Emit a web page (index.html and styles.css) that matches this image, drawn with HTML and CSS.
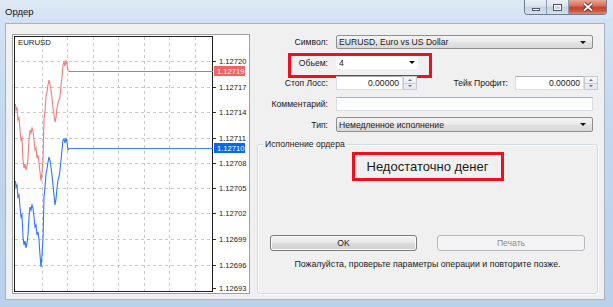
FILE: index.html
```html
<!DOCTYPE html>
<html>
<head>
<meta charset="utf-8">
<link rel="stylesheet" href="styles.css">
</head>
<body>
<div class="window">
  <div class="titlebar">
    <span class="title">Ордер</span>
    <div class="caption-btns">
      <span class="cbtn min"><i></i></span>
      <span class="cbtn max"><i></i></span>
      <span class="cbtn close">
        <svg width="14" height="10" viewBox="0 0 14 10"><path d="M3 1.5 L11 8.5 M11 1.5 L3 8.5" stroke="#5a1a12" stroke-width="3.4" fill="none"/><path d="M3 1.5 L11 8.5 M11 1.5 L3 8.5" stroke="#fff" stroke-width="1.8" fill="none"/></svg>
      </span>
    </div>
  </div>
  <div class="client">
    <div class="chart-panel">
      <svg class="chart" width="239" height="261" viewBox="12 34 239 261">
        <rect x="12.5" y="34.5" width="237" height="259" fill="#fff" stroke="#a0a0a0"/>
        <g stroke="#c9c9c9" stroke-dasharray="3 3" stroke-width="1">
          <path d="M42.5 37V291M67.5 37V291M93.5 37V291M118.5 37V291M144.5 37V291M169.5 37V291M195.5 37V291"/>
          <path d="M15 61.5H212M15 87.5H212M15 112.5H212M15 138.5H212M15 163.5H212M15 188.5H212M15 213.5H212M15 239.5H212M15 265.5H212"/>
        </g>
        <rect x="14.5" y="36.5" width="198" height="255" fill="none" stroke="#1e1e1e"/>
        <g stroke="#333">
          <path d="M213 61.5H216M213 87.5H216M213 112.5H216M213 138.5H216M213 163.5H216M213 188.5H216M213 213.5H216M213 239.5H216M213 265.5H216M213 288.5H216"/>
        </g>
        <g class="scale">
          <text x="219" y="64">1.12720</text>
          <text x="219" y="90">1.12717</text>
          <text x="219" y="115">1.12714</text>
          <text x="219" y="141">1.12711</text>
          <text x="219" y="166">1.12708</text>
          <text x="219" y="191">1.12705</text>
          <text x="219" y="216">1.12702</text>
          <text x="219" y="242">1.12699</text>
          <text x="219" y="268">1.12696</text>
          <text x="219" y="291">1.12693</text>
        </g>
        <text class="sym" x="18" y="45">EURUSD</text>
        <polyline fill="none" stroke="#f77a7a" stroke-width="1.1" points="15.5,104 16,110 17,108 18,120 19,118 20,130 21,140 22,138 23,160 24,168 25,164 26,170 27,166 28,158 29,140 30,130 31,133 32,128 33,131 34,140 35,150 36,148 37,158 38,155 39,163 40,172 41,181 42,172 43,160 44,120 45,110 46,97 47,92 48,85 49,80 50,84 51,90 52,98 53,108 54,115 55,122 56,118 57,108 58,103 59,100 60,97 61,85 62,77 63,65 64,62 65,66 66,61 67,64 68,70 69,71.5"/>
        <rect x="69" y="71" width="144" height="1" fill="#f46262"/>
        <polyline fill="none" stroke="#2a76ff" stroke-width="1.1" points="15.5,181 16,187 17,185 18,197 19,195 20,207 21,217 22,215 23,237 24,245 25,241 26,248 27,243 28,235 29,217 30,207 31,210 32,205 33,208 34,217 35,227 36,225 37,235 38,232 39,240 40,255 41,267 42,255 43,240 44,197 45,187 46,174 47,169 48,162 49,157 50,161 51,167 52,175 53,185 54,195 55,205 56,199 57,188 58,180 59,177 60,170 61,160 62,150 63,140 64,139 65,143 66,138 67,142 68,150 69,148.5"/>
        <rect x="69" y="148" width="144" height="1" fill="#3a82ff"/>
        <rect x="214" y="66" width="31" height="10" fill="#f06464"/>
        <text class="tag" x="217" y="74">1.12719</text>
        <rect x="214" y="143" width="31" height="10" fill="#0a66f5"/>
        <text class="tag" x="217" y="151">1.12710</text>
      </svg>
    </div>
    <div class="form">
      <div class="fields">
        <div class="row">
          <label class="lbl">Символ:</label>
          <div class="combo full"><span>EURUSD, Euro vs US Dollar</span><i class="arrow"></i></div>
        </div>
        <div class="row marked">
          <label class="lbl">Обьем:</label>
          <div class="edit-combo"><span>4</span><i class="arrow"></i></div>
        </div>
        <div class="row">
          <label class="lbl">Стоп Лосс:</label>
          <div class="spin-field sl"><span class="edit num">0.00000</span><span class="spin"><i class="up"></i><i class="down"></i></span></div>
          <label class="lbl2">Тейк Профит:</label>
          <div class="spin-field tp"><span class="edit num">0.00000</span><span class="spin"><i class="up"></i><i class="down"></i></span></div>
        </div>
        <div class="row">
          <label class="lbl">Комментарий:</label>
          <span class="edit full"></span>
        </div>
        <div class="row tall">
          <label class="lbl">Тип:</label>
          <div class="combo full"><span>Немедленное исполнение</span><i class="arrow"></i></div>
        </div>
      </div>
      <fieldset class="group">
        <legend>Исполнение ордера</legend>
        <div class="alert">Недостаточно денег</div>
        <div class="buttons">
          <button class="btn">OK</button>
          <button class="btn disabled">Печать</button>
        </div>
        <p class="note">Пожалуйста, проверьте параметры операции и повторите позже.</p>
      </fieldset>
    </div>
  </div>
</div>
</body>
</html>
```

FILE: styles.css
```css
* { box-sizing: border-box; }
html, body { margin: 0; padding: 0; }
body {
  width: 613px;
  height: 307px;
  overflow: hidden;
  font-family: "Liberation Sans", Arial, sans-serif;
  background: #c9dbef;
}
.window {
  width: 613px;
  height: 307px;
  display: flex;
  flex-direction: column;
  background: linear-gradient(180deg, #dfe9f5 0px, #d3e2f3 20px, #c4d8ef 120px, #b9d0eb 307px);
}
.titlebar {
  height: 23px;
  flex: none;
  display: flex;
  justify-content: space-between;
  align-items: flex-start;
  padding: 0 6px 0 5px;
}
.title {
  margin-top: 6px;
  font-size: 9.5px;
  color: #111;
}
.caption-btns {
  display: flex;
  height: 15px;
  border: 1px solid #6d7e93;
  border-top: none;
  border-radius: 0 0 4px 4px;
  overflow: hidden;
}
.cbtn {
  height: 14px;
  display: flex;
  align-items: center;
  justify-content: center;
}
.cbtn.min, .cbtn.max {
  width: 22px;
  background: linear-gradient(180deg, #eaf0f7 0, #dbe4ee 45%, #c6d2e0 50%, #d6e1ed 100%);
  border-right: 1px solid #8c9cb0;
}
.cbtn.min i {
  width: 8px;
  height: 3px;
  margin-top: 4px;
  background: #fff;
  border: 1px solid #4a5566;
}
.cbtn.max i {
  width: 9px;
  height: 7px;
  border: 1px solid #4a5566;
  background: transparent;
  box-shadow: inset 0 0 0 1px #fff;
}
.cbtn.close {
  width: 37px;
  background: linear-gradient(180deg, #e7a797 0, #d56c55 45%, #c4412a 50%, #d0593f 80%, #e08a6c 100%);
}
.client {
  margin: 0 8px 0 5px;
  height: 277px;
  background: #f0f0f0;
  border: 1px solid #a3b4c8;
  display: flex;
  align-items: stretch;
  padding: 10px 6px 5px 6px;
}
.chart-panel {
  width: 239px;
  height: 261px;
  flex: none;
}
.chart { display: block; }
.scale text {
  font-family: "Liberation Sans", Arial, sans-serif;
  font-size: 7.6px;
  fill: #1a1a1a;
}
.chart .sym {
  font-family: "Liberation Sans", Arial, sans-serif;
  font-size: 7.8px;
  fill: #222;
}
.chart .tag {
  font-family: "Liberation Sans", Arial, sans-serif;
  font-size: 7.6px;
  fill: #fff;
}
.form {
  margin-left: 6px;
  width: 341px;
  display: flex;
  flex-direction: column;
  font-size: 8.6px;
  color: #1a1a1a;
}
.fields {
  margin-top: 1px;
  display: flex;
  flex-direction: column;
  gap: 6.5px;
}
.row {
  height: 14px;
  display: flex;
  align-items: center;
  position: relative;
}
.row.tall { height: 15px; }
.lbl {
  width: 71px;
  text-align: right;
  margin-right: 8px;
  flex: none;
}
.full { width: 257px; flex: none; }
.combo {
  height: 100%;
  border: 1px solid #8e8f8f;
  border-radius: 2px;
  background: linear-gradient(180deg, #f4f4f4 0, #ececec 45%, #e1e1e1 55%, #d9d9d9 100%);
  display: flex;
  align-items: center;
  justify-content: space-between;
  padding: 0 6px 0 2px;
}
.arrow {
  width: 0;
  height: 0;
  border-left: 3px solid transparent;
  border-right: 3px solid transparent;
  border-top: 3px solid #111;
}
.edit-combo {
  width: 82px;
  height: 13px;
  background: #fff;
  display: flex;
  align-items: center;
  justify-content: space-between;
  padding: 0 3px 0 3px;
}
.marked::after {
  content: "";
  position: absolute;
  left: 31px;
  top: -2.5px;
  width: 138px;
  height: 19px;
  border: 3px solid #ee111b;
}
.edit {
  height: 14px;
  background: #fff;
  border: 1px solid #d9dde4;
  border-top-color: #abadb3;
  display: flex;
  align-items: center;
}
.num {
  justify-content: flex-end;
  padding-right: 3px;
}
.spin-field {
  display: flex;
  height: 14px;
  flex: none;
}
.spin-field.sl .edit { width: 67px; }
.spin-field.tp .edit { width: 69px; }
.spin {
  width: 14px;
  height: 14px;
  display: flex;
  flex-direction: column;
  border: 1px solid #c5cbd3;
  background: linear-gradient(180deg, #f6f7f9, #e4e8ee);
}
.spin i {
  flex: 1;
  display: flex;
  align-items: center;
  justify-content: center;
}
.spin i.up { border-bottom: 1px solid #c5cbd3; }
.spin i::before {
  content: "";
  width: 0;
  height: 0;
  border-left: 2.5px solid transparent;
  border-right: 2.5px solid transparent;
}
.spin i.up::before { border-bottom: 2.5px solid #5b6f8a; }
.spin i.down::before { border-top: 2.5px solid #5b6f8a; }
.lbl2 {
  flex: 1;
  text-align: right;
  margin-right: 7px;
}
.group {
  margin: 7px 0 0 0;
  padding: 0 12px 15px 12px;
  border: 1px solid #d3dbe2;
  border-radius: 3px;
  box-shadow: inset 1px 1px 0 #fff, 1px 1px 0 #fff;
  flex: 1;
  display: flex;
  flex-direction: column;
  align-items: center;
  min-width: 0;
}
.group legend {
  font-size: 8.6px;
  padding: 0 2px;
  margin-left: -7px;
  color: #1a1a1a;
}
.alert {
  margin-top: 3px;
  width: 152px;
  height: 29px;
  border: 3px solid #ee111b;
  display: flex;
  align-items: center;
  justify-content: center;
  font-size: 13px;
  color: #1a1a1a;
}
.buttons {
  margin-top: 54px;
  display: flex;
  gap: 20px;
}
.btn {
  width: 147px;
  height: 16px;
  padding: 0;
  font-family: "Liberation Sans", Arial, sans-serif;
  font-size: 8.6px;
  color: #1a1a1a;
  border: 1px solid #7a7a7a;
  border-radius: 3px;
  background: linear-gradient(180deg, #f2f2f2 0, #ebebeb 45%, #dddddd 50%, #cfcfcf 100%);
  box-shadow: inset 0 0 0 1px #fbfbfb;
}
.btn.disabled {
  width: 148px;
  color: #8d8d8d;
  border-color: #b5b9bd;
  background: #f4f4f4;
  box-shadow: none;
}
.note {
  margin: 8px 0 0 0;
  font-size: 8.8px;
  line-height: 11px;
  color: #1a1a1a;
}
```
